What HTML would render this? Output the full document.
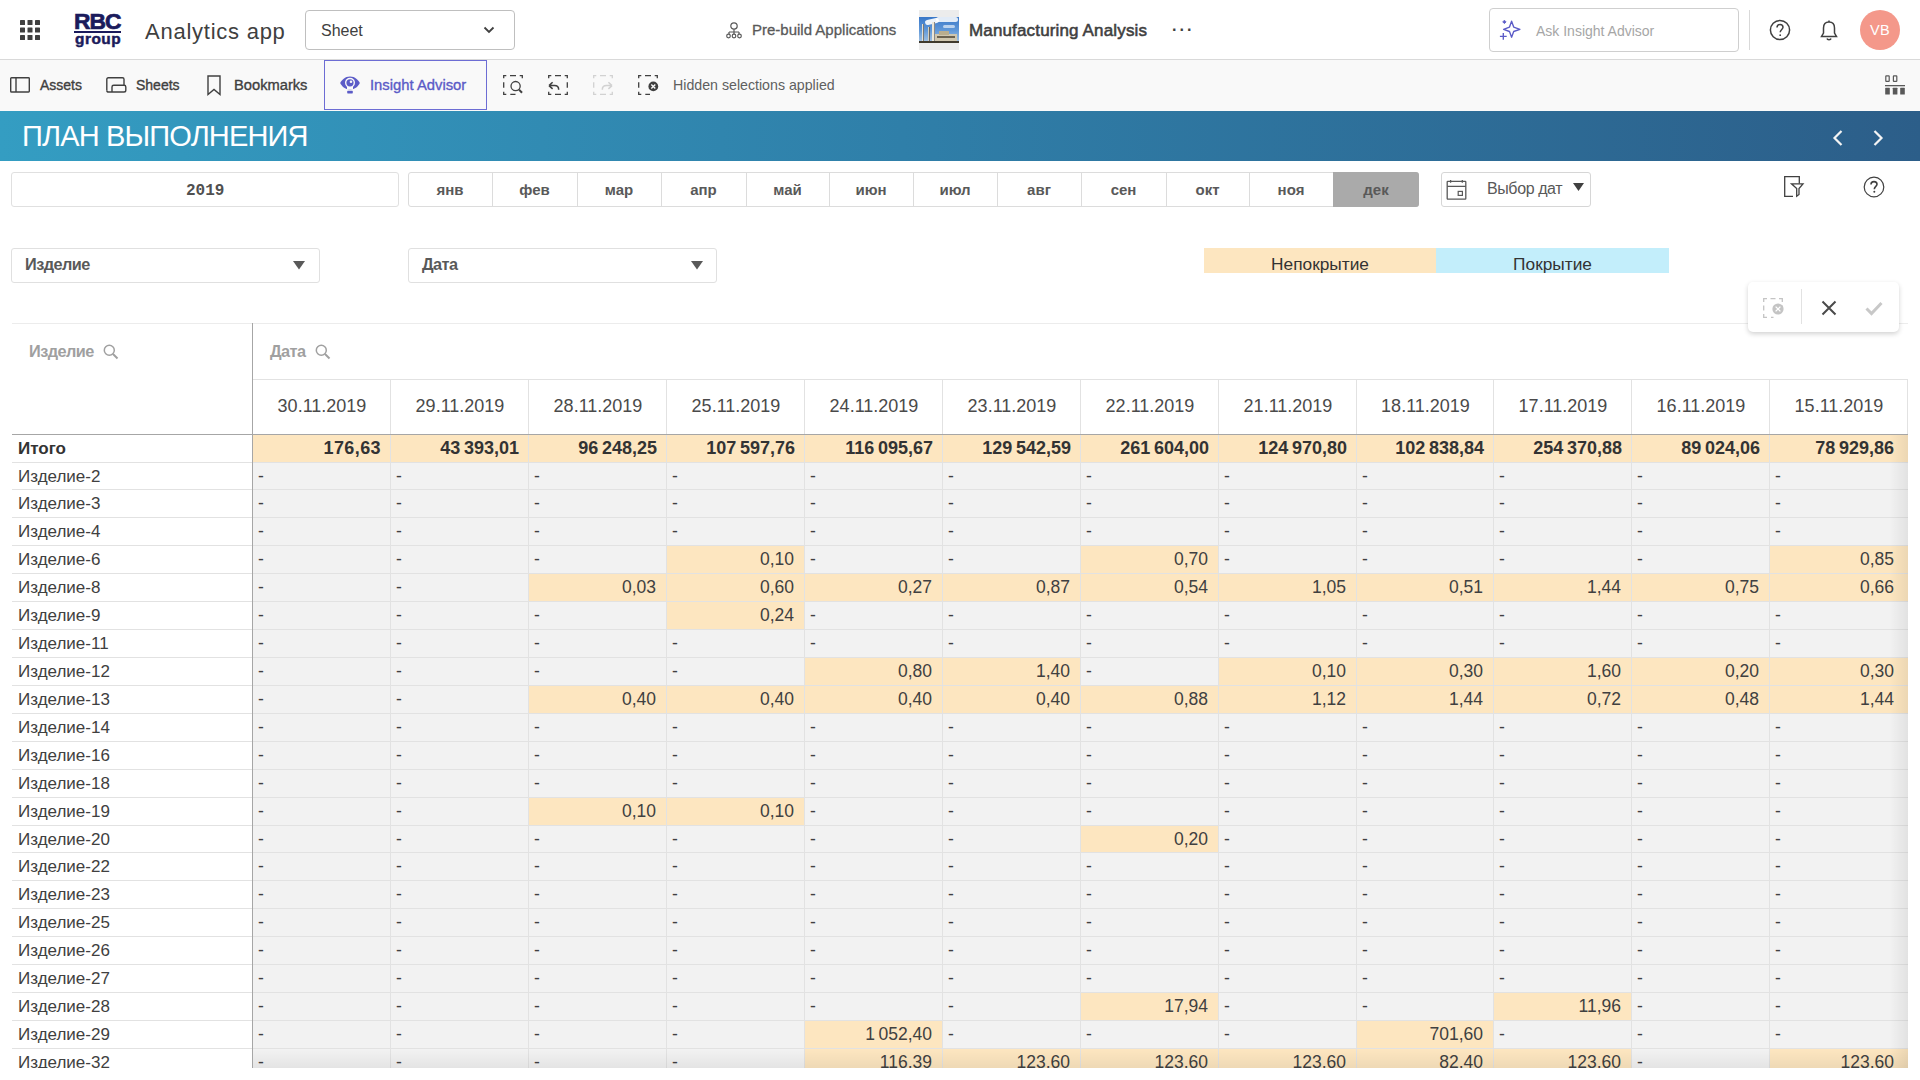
<!DOCTYPE html>
<html><head><meta charset="utf-8">
<style>
*{margin:0;padding:0;box-sizing:border-box}
html,body{width:1920px;height:1080px;overflow:hidden;background:#fff;font-family:"Liberation Sans",sans-serif;color:#404040}
.a{position:absolute}
svg{display:block}
/* top bar */
#top{position:absolute;left:0;top:0;width:1920px;height:60px;background:#fff;border-bottom:1px solid #d9d9d9}
#tool{position:absolute;left:0;top:60px;width:1920px;height:51px;background:#f9f9f9}
#title{position:absolute;left:0;top:111px;width:1920px;height:50px;background:linear-gradient(90deg,#349dc2 0%,#2f7fa9 47%,#2c5e89 100%)}
.txt{position:absolute;white-space:pre;line-height:1}
.box{position:absolute;border:1px solid #e0e0e0;border-radius:3px;background:#fff}
.mon{position:absolute;top:172px;height:35px;border:1px solid #dcdcdc;border-left:none;background:#fff;font:bold 15px "Liberation Sans",sans-serif;color:#595959;text-align:center;line-height:33px}
</style></head><body>
<div id="top">
  <!-- grid icon -->
  <svg class="a" style="left:20px;top:20px" width="20" height="20" viewBox="0 0 20 20" fill="#404040">
    <rect x="0" y="0" width="5" height="5" rx="0.6"/><rect x="7.5" y="0" width="5" height="5" rx="0.6"/><rect x="15" y="0" width="5" height="5" rx="0.6"/>
    <rect x="0" y="7.5" width="5" height="5" rx="0.6"/><rect x="7.5" y="7.5" width="5" height="5" rx="0.6"/><rect x="15" y="7.5" width="5" height="5" rx="0.6"/>
    <rect x="0" y="15" width="5" height="5" rx="0.6"/><rect x="7.5" y="15" width="5" height="5" rx="0.6"/><rect x="15" y="15" width="5" height="5" rx="0.6"/>
  </svg>
  <!-- logo -->
  <div class="txt" style="left:74px;top:8px;font:bold 22.8px 'Liberation Sans';color:#1b1b5c;letter-spacing:-1px;-webkit-text-stroke:0.7px #1b1b5c">RBC</div>
  <div class="a" style="left:74px;top:31px;width:47px;height:2px;background:#1b1b5c"></div>
  <div class="txt" style="left:75px;top:30px;font:bold 15.4px 'Liberation Sans';color:#1b1b5c;letter-spacing:0.5px;-webkit-text-stroke:0.5px #1b1b5c">group</div>
  <div class="txt" style="left:145px;top:19px;font:22px 'Liberation Sans';color:#404040;letter-spacing:0.75px">Analytics app</div>
  <!-- sheet dropdown -->
  <div class="a" style="left:305px;top:10px;width:210px;height:40px;border:1px solid #bfbfbf;border-radius:4px"></div>
  <div class="txt" style="left:321px;top:22px;font:16px 'Liberation Sans';color:#404040">Sheet</div>
  <svg class="a" style="left:483px;top:26px" width="12" height="8" viewBox="0 0 12 8"><path d="M1.5 1.5 L6 6 L10.5 1.5" stroke="#404040" stroke-width="1.8" fill="none"/></svg>
  <!-- pre-build -->
  <svg class="a" style="left:725px;top:21px" width="18" height="18" viewBox="0 0 18 18" fill="none" stroke="#595959" stroke-width="1.2">
    <circle cx="9" cy="5" r="3.2"/><path d="M9 8.2 V11 M4 11 H14 M4 11 V13 M9 11 V13 M14 11 V13"/><circle cx="3.5" cy="15" r="1.8"/><circle cx="9" cy="15" r="1.8"/><circle cx="14.5" cy="15" r="1.8"/>
  </svg>
  <div class="txt" style="left:752px;top:21px;font:15px 'Liberation Sans';color:#595959;-webkit-text-stroke:0.3px #595959">Pre-build Applications</div>
  <!-- thumbnail -->
  <div class="a" style="left:919px;top:10px;width:40px;height:40px;background:#ececec;overflow:hidden">
    <div class="a" style="left:0;top:7px;width:40px;height:26px;background:linear-gradient(180deg,#3a78c8 0%,#5f97d8 50%,#a8c6e4 100%)"></div>
    <div class="a" style="left:6px;top:9px;width:14px;height:5px;border-radius:3px;background:rgba(255,255,255,0.9);transform:rotate(-12deg)"></div>
    <div class="a" style="left:17px;top:7px;width:22px;height:5px;border-radius:3px;background:rgba(255,255,255,0.85)"></div>
    <div class="a" style="left:24px;top:15px;width:12px;height:3px;border-radius:2px;background:rgba(255,255,255,0.6)"></div>
    <div class="a" style="left:3px;top:14px;width:2px;height:17px;background:#e4e0d4;border-right:1px solid #777"></div>
    <div class="a" style="left:9px;top:17px;width:2px;height:14px;background:#d4cfc0;border-right:1px solid #666"></div>
    <div class="a" style="left:13px;top:12px;width:3px;height:19px;background:#ebe6d8;border-right:1px solid #888"></div>
    <div class="a" style="left:16px;top:24px;width:22px;height:8px;background:#cfc6ae"></div>
    <div class="a" style="left:20px;top:21px;width:10px;height:4px;background:#b9ad8e"></div>
    <div class="a" style="left:18px;top:26px;width:18px;height:2px;background:#6b6250"></div>
    <div class="a" style="left:0;top:31px;width:40px;height:2px;background:#3f392c"></div>
  </div>
  <div class="txt" style="left:969px;top:21px;font:17px 'Liberation Sans';color:#404040;letter-spacing:0.15px;-webkit-text-stroke:0.55px #404040">Manufacturing Analysis</div>
  <div class="txt" style="left:1172px;top:21px;font:bold 16px 'Liberation Sans';color:#404040;letter-spacing:2.2px">···</div>
  <!-- ask insight -->
  <div class="a" style="left:1489px;top:8px;width:250px;height:44px;border:1px solid #cfcfcf;border-radius:4px"></div>
  <svg class="a" style="left:1499px;top:18px" width="24" height="24" viewBox="0 0 24 24" fill="none" stroke="#5b5bc7" stroke-width="1.35" stroke-linejoin="round">
    <path d="M12.6 3.2 L14.7 9.1 L20.9 11.3 L14.7 13.5 L12.6 19.2 L10.5 13.5 L4.6 11.3 L10.5 9.1 Z"/>
    <path d="M0.9 18.4 H7.7 M4.3 15 V21.8"/>
    <path d="M5.4 2.2 L7.1 3.9 L5.4 5.6 L3.7 3.9 Z" fill="#5b5bc7" stroke-width="0.8"/>
  </svg>
  <div class="txt" style="left:1536px;top:23px;font:14px 'Liberation Sans';color:#a6a6a6">Ask Insight Advisor</div>
  <div class="a" style="left:1749px;top:10px;width:1px;height:40px;background:#d9d9d9"></div>
  <svg class="a" style="left:1769px;top:19px" width="22" height="22" viewBox="0 0 22 22" fill="none" stroke="#404040" stroke-width="1.5">
    <circle cx="11" cy="11" r="9.6"/><path d="M8 8.6 C8 6.6 9.4 5.5 11 5.5 C12.8 5.5 14 6.7 14 8.3 C14 10.4 11.2 10.6 11.2 13.3"/><circle cx="11.2" cy="16.2" r="0.9" fill="#404040" stroke="none"/>
  </svg>
  <svg class="a" style="left:1819px;top:20px" width="20" height="22" viewBox="0 0 20 22" fill="none" stroke="#404040" stroke-width="1.5">
    <path d="M10 2 C6 2 4.5 5 4.5 8 V13 L2.5 16.5 H17.5 L15.5 13 V8 C15.5 5 14 2 10 2 Z"/><path d="M8 18.5 C8.3 20 11.7 20 12 18.5"/><path d="M10 0.5 V2"/>
  </svg>
  <div class="a" style="left:1860px;top:10px;width:40px;height:40px;border-radius:50%;background:#f4988a;color:#fff;font:14.5px 'Liberation Sans';text-align:center;line-height:40px;letter-spacing:0.3px">VB</div>
</div>

<div id="tool">
  <svg class="a" style="left:10px;top:17px" width="20" height="16" viewBox="0 0 20 16" fill="none" stroke="#404040" stroke-width="1.4"><rect x="0.7" y="0.7" width="18.6" height="14.3" rx="0.8"/><path d="M6 0.7 V15"/></svg>
  <div class="txt" style="left:40px;top:17px;font:14px 'Liberation Sans';color:#404040;-webkit-text-stroke:0.35px #404040">Assets</div>
  <svg class="a" style="left:106px;top:17px" width="21" height="16" viewBox="0 0 21 16" fill="none" stroke="#404040" stroke-width="1.4"><path d="M0.8 13.5 V2.3 Q0.8 0.8 2.3 0.8 H16.5 Q18 0.8 18 2.3 V8"/><path d="M6 14.5 V10 Q6 8.3 7.7 8.3 H18.2 Q19.8 8.3 19.8 10 V13.2 Q19.8 15 18 15 H2.5 Q0.8 15 0.8 13.5"/></svg>
  <div class="txt" style="left:136px;top:17px;font:14px 'Liberation Sans';color:#404040;-webkit-text-stroke:0.35px #404040">Sheets</div>
  <svg class="a" style="left:207px;top:15px" width="14" height="21" viewBox="0 0 14 21" fill="none" stroke="#404040" stroke-width="1.4"><path d="M1 1 H13 V19.5 L7 14.5 L1 19.5 Z"/></svg>
  <div class="txt" style="left:234px;top:17px;font:14.7px 'Liberation Sans';color:#404040;-webkit-text-stroke:0.35px #404040">Bookmarks</div>
  <div class="a" style="left:324px;top:0;width:163px;height:50px;border:1px solid #6d6dd4;background:#f9f9f9"></div>
  <svg class="a" style="left:340px;top:16px" width="20" height="18" viewBox="0 0 20 18"><path d="M10 0.5 C5 0.5 1.6 4 0.2 7 C1.6 10 5 13.5 10 13.5 C15 13.5 18.4 10 19.8 7 C18.4 4 15 0.5 10 0.5 Z" fill="#5b5bc7"/><circle cx="10" cy="6.8" r="5" fill="#f9f9f9"/><path d="M7 10 H13 V13.5 H7 Z" fill="#f9f9f9"/><circle cx="10" cy="6.8" r="3.6" fill="#5b5bc7"/><circle cx="11" cy="5.8" r="1.3" fill="#f9f9f9"/><rect x="7.2" y="14.8" width="5.6" height="2.6" rx="0.6" fill="#5b5bc7"/></svg>
  <div class="txt" style="left:370px;top:17px;font:14.8px 'Liberation Sans';color:#5b5bc7;-webkit-text-stroke:0.35px #5b5bc7">Insight Advisor</div>
  <svg class="a" style="left:503px;top:15px" width="21" height="21" viewBox="0 0 21 21" fill="none" stroke="#404040" stroke-width="1.3"><path d="M0.7 3.3 V0.7 H3.3 M7 0.7 H13 M16.7 0.7 H19.3 V3.3 M0.7 7.3 V12.7 M0.7 16.7 V19.3 H3.3 M7.3 19.3 H12.5"/><circle cx="12.6" cy="11.1" r="4.6"/><path d="M16 14.6 L19 17.8" stroke-width="2"/></svg>
  <svg class="a" style="left:548px;top:15px" width="21" height="21" viewBox="0 0 21 21" fill="none" stroke="#404040" stroke-width="1.3"><path d="M0.7 3.3 V0.7 H3.3 M7 0.7 H13 M16.7 0.7 H19.3 V3.3 M19.3 7.3 V12.7 M19.3 16.7 V19.3 H16.7 M13 19.3 H7 M3.3 19.3 H0.7 V16.7"/><path d="M1 10.6 L4.6 7.3 M1 10.6 L4.6 13.9 M1 10.6 H6.5 C9.2 10.6 10.7 12.3 10.7 14.8" stroke-width="1.5"/></svg>
  <svg class="a" style="left:593px;top:15px" width="21" height="21" viewBox="0 0 21 21" fill="none" stroke="#d2d2d2" stroke-width="1.3"><path d="M0.7 3.3 V0.7 H3.3 M7 0.7 H13 M16.7 0.7 H19.3 V3.3 M0.7 7.3 V12.7 M19.3 16.7 V19.3 H16.7 M13 19.3 H7 M3.3 19.3 H0.7 V16.7"/><path d="M19 10.6 L15.4 7.3 M19 10.6 L15.4 13.9 M19 10.6 H13.5 C10.8 10.6 9.3 12.3 9.3 14.8" stroke-width="1.5"/></svg>
  <svg class="a" style="left:638px;top:15px" width="21" height="21" viewBox="0 0 21 21" fill="none" stroke="#404040" stroke-width="1.3"><path d="M0.7 3.3 V0.7 H3.3 M7 0.7 H13 M16.7 0.7 H19.3 V3.3 M0.7 7.3 V12.7 M0.7 16.7 V19.3 H3.3 M7.3 19.3 H12"/><circle cx="15.3" cy="11.4" r="4.9" fill="#404040" stroke="none"/><path d="M13.3 9.4 L17.3 13.4 M17.3 9.4 L13.3 13.4" stroke="#f9f9f9" stroke-width="1.4"/></svg>
  <div class="txt" style="left:673px;top:17px;font:14.2px 'Liberation Sans';color:#5f5f5f">Hidden selections applied</div>
  <svg class="a" style="left:1884px;top:15px" width="22" height="21" viewBox="0 0 22 21" fill="#595959"><rect x="1.8" y="0.8" width="3.4" height="5.6" rx="0.5" fill="none" stroke="#595959" stroke-width="1.2"/><rect x="9.4" y="0.8" width="3.4" height="5.6" rx="0.5" fill="none" stroke="#595959" stroke-width="1.2"/><rect x="1" y="10" width="20" height="1.3"/><rect x="1.2" y="12.8" width="4.6" height="6.8" rx="0.4"/><rect x="8.8" y="12.8" width="4.6" height="6.8" rx="0.4"/><rect x="16.2" y="12.8" width="4.6" height="6.8" rx="0.4"/></svg>
</div>

<div id="title">
  <div class="txt" style="left:22px;top:9px;font:29px 'Liberation Sans';color:#fff;letter-spacing:-0.85px">ПЛАН ВЫПОЛНЕНИЯ</div>
  <svg class="a" style="left:1831px;top:17px" width="14" height="20" viewBox="0 0 14 20"><path d="M10.5 3 L3.5 10 L10.5 17" stroke="#f4f4f4" stroke-width="2.2" fill="none"/></svg>
  <svg class="a" style="left:1871px;top:17px" width="14" height="20" viewBox="0 0 14 20"><path d="M3.5 3 L10.5 10 L3.5 17" stroke="#f4f4f4" stroke-width="2.2" fill="none"/></svg>
</div>

<style>
.dh{position:absolute;top:380px;height:54px;font:18px "Liberation Sans",sans-serif;color:#4a4a4a;text-align:center;line-height:52px}
.tc{position:absolute;top:435px;height:27px;background:#fde6c0;font:bold 18px "Liberation Sans",sans-serif;color:#333;text-align:right;padding-right:10px;line-height:27px;letter-spacing:0.4px}
.rl{position:absolute;left:12px;width:240px;padding-left:6px;font:17px "Liberation Sans",sans-serif;color:#404040;line-height:27px;white-space:nowrap;overflow:hidden}
.c{position:absolute;font:17.5px "Liberation Sans",sans-serif;color:#404040;line-height:27px;white-space:nowrap;overflow:hidden}
.g{background:#f2f2f2;padding-left:5px}
.p{background:#fde6c0;text-align:right;padding-right:11px}
.vl{position:absolute;width:1px;background:#e2e2e2;z-index:2}
.hl{position:absolute;left:12px;width:1896px;height:1px;background:#e2e2e2;z-index:2}
</style>
<!-- filters row -->
<div class="box" style="left:11px;top:172px;width:388px;height:35px"></div>
<div class="txt" style="left:186px;top:182px;font:bold 16px 'Liberation Mono';color:#505050">2019</div>
<div class="a" style="left:408px;top:172px;width:1011px;height:35px;border:1px solid #dcdcdc;border-radius:3px;background:#fff"></div>
<div class="a" style="left:408px;top:172px;width:84px;height:35px;font:bold 15px Liberation Sans;color:#595959;text-align:center;line-height:35px">янв</div>
<div class="a" style="left:492px;top:173px;width:1px;height:33px;background:#dcdcdc"></div>
<div class="a" style="left:492px;top:172px;width:85px;height:35px;font:bold 15px Liberation Sans;color:#595959;text-align:center;line-height:35px">фев</div>
<div class="a" style="left:577px;top:173px;width:1px;height:33px;background:#dcdcdc"></div>
<div class="a" style="left:577px;top:172px;width:84px;height:35px;font:bold 15px Liberation Sans;color:#595959;text-align:center;line-height:35px">мар</div>
<div class="a" style="left:661px;top:173px;width:1px;height:33px;background:#dcdcdc"></div>
<div class="a" style="left:661px;top:172px;width:85px;height:35px;font:bold 15px Liberation Sans;color:#595959;text-align:center;line-height:35px">апр</div>
<div class="a" style="left:746px;top:173px;width:1px;height:33px;background:#dcdcdc"></div>
<div class="a" style="left:746px;top:172px;width:83px;height:35px;font:bold 15px Liberation Sans;color:#595959;text-align:center;line-height:35px">май</div>
<div class="a" style="left:829px;top:173px;width:1px;height:33px;background:#dcdcdc"></div>
<div class="a" style="left:829px;top:172px;width:84px;height:35px;font:bold 15px Liberation Sans;color:#595959;text-align:center;line-height:35px">июн</div>
<div class="a" style="left:913px;top:173px;width:1px;height:33px;background:#dcdcdc"></div>
<div class="a" style="left:913px;top:172px;width:84px;height:35px;font:bold 15px Liberation Sans;color:#595959;text-align:center;line-height:35px">июл</div>
<div class="a" style="left:997px;top:173px;width:1px;height:33px;background:#dcdcdc"></div>
<div class="a" style="left:997px;top:172px;width:84px;height:35px;font:bold 15px Liberation Sans;color:#595959;text-align:center;line-height:35px">авг</div>
<div class="a" style="left:1081px;top:173px;width:1px;height:33px;background:#dcdcdc"></div>
<div class="a" style="left:1081px;top:172px;width:85px;height:35px;font:bold 15px Liberation Sans;color:#595959;text-align:center;line-height:35px">сен</div>
<div class="a" style="left:1166px;top:173px;width:1px;height:33px;background:#dcdcdc"></div>
<div class="a" style="left:1166px;top:172px;width:83px;height:35px;font:bold 15px Liberation Sans;color:#595959;text-align:center;line-height:35px">окт</div>
<div class="a" style="left:1249px;top:173px;width:1px;height:33px;background:#dcdcdc"></div>
<div class="a" style="left:1249px;top:172px;width:84px;height:35px;font:bold 15px Liberation Sans;color:#595959;text-align:center;line-height:35px">ноя</div>
<div class="a" style="left:1333px;top:172px;width:86px;height:35px;background:#aaa;border-radius:0 3px 3px 0;font:bold 15px Liberation Sans;color:#595959;text-align:center;line-height:35px">дек</div>
<div class="box" style="left:1441px;top:172px;width:150px;height:35px;border-color:#d6d6d6"></div>
<svg class="a" style="left:1446px;top:180px" width="21" height="21" viewBox="0 0 21 21" fill="none" stroke="#595959" stroke-width="1.3"><rect x="1.2" y="1.3" width="18.6" height="17.8" rx="0.6"/><path d="M1.2 6.4 H19.8 M4.6 0 V2.8 M16.3 0 V2.8"/><rect x="12.2" y="11.4" width="4.2" height="4" stroke-width="1.2"/></svg>
<div class="txt" style="left:1487px;top:180px;font:16px 'Liberation Sans';color:#595959;letter-spacing:-0.4px">Выбор дат</div>
<svg class="a" style="left:1573px;top:183px" width="11" height="8" viewBox="0 0 11 8"><path d="M0 0 H11 L5.5 8 Z" fill="#404040"/></svg>
<svg class="a" style="left:1784px;top:176px" width="22" height="22" viewBox="0 0 22 22" fill="none" stroke="#404040" stroke-width="1.3"><path d="M9 20.3 H0.7 V0.7 H15.3 V7.5"/><path d="M7.5 7.8 H19 L15 12.5 V18.5 L12.7 20.2 V12.5 Z"/></svg>
<svg class="a" style="left:1863px;top:176px" width="22" height="22" viewBox="0 0 22 22" fill="none" stroke="#404040" stroke-width="1.2"><circle cx="11" cy="11" r="9.8"/><path d="M8 8.5 C8 6.5 9.4 5.6 11 5.6 C12.7 5.6 14 6.7 14 8.3 C14 10.3 11.3 10.6 11.3 13.2" stroke-width="1.6"/><circle cx="11.3" cy="15.8" r="1" fill="#404040" stroke="none"/></svg>

<!-- dropdowns -->
<div class="box" style="left:11px;top:248px;width:309px;height:35px"></div>
<div class="txt" style="left:25px;top:255px;font:bold 16.3px 'Liberation Sans';color:#595959;letter-spacing:-0.55px">Изделие</div>
<svg class="a" style="left:293px;top:261px" width="12" height="9" viewBox="0 0 12 9"><path d="M0 0 H12 L6 8.6 Z" fill="#595959"/></svg>
<div class="box" style="left:408px;top:248px;width:309px;height:35px"></div>
<div class="txt" style="left:422px;top:255px;font:bold 16.3px 'Liberation Sans';color:#595959;letter-spacing:-0.55px">Дата</div>
<svg class="a" style="left:691px;top:261px" width="12" height="9" viewBox="0 0 12 9"><path d="M0 0 H12 L6 8.6 Z" fill="#595959"/></svg>

<!-- legend -->
<div class="a" style="left:1204px;top:248px;width:232px;height:25px;background:#fde6c0;font:17.3px 'Liberation Sans';color:#333;text-align:center;line-height:33px;overflow:hidden">Непокрытие</div>
<div class="a" style="left:1436px;top:248px;width:233px;height:25px;background:#c3eefb;font:17.3px 'Liberation Sans';color:#333;text-align:center;line-height:33px;overflow:hidden">Покрытие</div>

<!-- table frame -->
<div class="a" style="left:12px;top:323px;width:1896px;height:1px;background:#ececec"></div>
<div class="a" style="left:252px;top:323px;width:1px;height:745px;background:#a6a6a6;z-index:3"></div>
<div class="a" style="left:253px;top:379px;width:1655px;height:1px;background:#e2e2e2"></div>
<div class="a" style="left:1907px;top:379px;width:1px;height:55px;background:#e2e2e2"></div>
<div class="a" style="left:12px;top:434px;width:1896px;height:1px;background:#a6a6a6;z-index:3"></div>
<div class="txt" style="left:29px;top:342px;font:bold 16.3px 'Liberation Sans';color:#a0a0a0;letter-spacing:-0.55px">Изделие</div>
<svg class="a" style="left:103px;top:344px" width="16" height="16" viewBox="0 0 16 16" fill="none" stroke="#a0a0a0" stroke-width="1.5"><circle cx="6.3" cy="6.3" r="5"/><path d="M10 10 L14.5 14.5" stroke-width="2"/></svg>
<div class="txt" style="left:270px;top:342px;font:bold 16.3px 'Liberation Sans';color:#a0a0a0;letter-spacing:-0.55px">Дата</div>
<svg class="a" style="left:315px;top:344px" width="16" height="16" viewBox="0 0 16 16" fill="none" stroke="#a0a0a0" stroke-width="1.5"><circle cx="6.3" cy="6.3" r="5"/><path d="M10 10 L14.5 14.5" stroke-width="2"/></svg>
<div class="txt" style="left:18px;top:439px;font:bold 17px 'Liberation Sans';color:#333">Итого</div>
<div class="a" style="left:12px;top:462px;width:1896px;height:1px;background:#e2e2e2;z-index:2"></div>

<!-- selection popup -->
<div class="a" style="left:1748px;top:282px;width:151px;height:50px;background:#fff;border-radius:5px;box-shadow:0 2px 5px rgba(0,0,0,0.18);z-index:10">
  <svg class="a" style="left:15px;top:16px" width="20" height="20" viewBox="0 0 20 20" fill="none" stroke="#c4c4c4" stroke-width="1.3"><path d="M0.7 4 V0.7 H4 M7.5 0.7 H12.5 M16 0.7 H19.3 V4 M19.3 7.5 V10 M4 19.3 H0.7 V16 M0.7 12.5 V7.5 M8 19.3 H10.5"/></svg>
  <svg class="a" style="left:24px;top:21px" width="12" height="12" viewBox="0 0 12 12"><circle cx="6" cy="6" r="5.6" fill="#c4c4c4"/><path d="M3.6 3.6 L8.4 8.4 M8.4 3.6 L3.6 8.4" stroke="#fff" stroke-width="1.3"/></svg>
  <div class="a" style="left:53px;top:7px;width:1px;height:35px;background:#e2e2e2"></div>
  <svg class="a" style="left:73px;top:18px" width="16" height="16" viewBox="0 0 16 16"><path d="M1.5 1.5 L14.5 14.5 M14.5 1.5 L1.5 14.5" stroke="#4a4a4a" stroke-width="2"/></svg>
  <svg class="a" style="left:117px;top:19px" width="18" height="15" viewBox="0 0 18 15"><path d="M1.5 7.5 L6.5 12.5 L16.5 2" stroke="#c8c8c8" stroke-width="3" fill="none"/></svg>
</div>
<div id="tbl">
<div class="dh" style="left:253px;width:138px">30.11.2019</div>
<div class="dh" style="left:391px;width:138px">29.11.2019</div>
<div class="vl" style="left:390px;top:380px;height:688px"></div>
<div class="dh" style="left:529px;width:138px">28.11.2019</div>
<div class="vl" style="left:528px;top:380px;height:688px"></div>
<div class="dh" style="left:667px;width:138px">25.11.2019</div>
<div class="vl" style="left:666px;top:380px;height:688px"></div>
<div class="dh" style="left:805px;width:138px">24.11.2019</div>
<div class="vl" style="left:804px;top:380px;height:688px"></div>
<div class="dh" style="left:943px;width:138px">23.11.2019</div>
<div class="vl" style="left:942px;top:380px;height:688px"></div>
<div class="dh" style="left:1081px;width:138px">22.11.2019</div>
<div class="vl" style="left:1080px;top:380px;height:688px"></div>
<div class="dh" style="left:1219px;width:138px">21.11.2019</div>
<div class="vl" style="left:1218px;top:380px;height:688px"></div>
<div class="dh" style="left:1357px;width:137px">18.11.2019</div>
<div class="vl" style="left:1356px;top:380px;height:688px"></div>
<div class="dh" style="left:1494px;width:138px">17.11.2019</div>
<div class="vl" style="left:1493px;top:380px;height:688px"></div>
<div class="dh" style="left:1632px;width:138px">16.11.2019</div>
<div class="vl" style="left:1631px;top:380px;height:688px"></div>
<div class="dh" style="left:1770px;width:138px">15.11.2019</div>
<div class="vl" style="left:1769px;top:380px;height:688px"></div>
<div class="tc" style="left:253px;width:138px;">176,63</div>
<div class="tc" style="left:391px;width:138px;">43&#8239;393,01</div>
<div class="tc" style="left:529px;width:138px;">96&#8239;248,25</div>
<div class="tc" style="left:667px;width:138px;">107&#8239;597,76</div>
<div class="tc" style="left:805px;width:138px;">116&#8239;095,67</div>
<div class="tc" style="left:943px;width:138px;">129&#8239;542,59</div>
<div class="tc" style="left:1081px;width:138px;">261&#8239;604,00</div>
<div class="tc" style="left:1219px;width:138px;">124&#8239;970,80</div>
<div class="tc" style="left:1357px;width:137px;">102&#8239;838,84</div>
<div class="tc" style="left:1494px;width:138px;">254&#8239;370,88</div>
<div class="tc" style="left:1632px;width:138px;">89&#8239;024,06</div>
<div class="tc" style="left:1770px;width:138px;padding-right:14px;">78&#8239;929,86</div>
<div class="rl" style="top:463px;height:27px">Изделие-2</div>
<div class="c g" style="left:253px;top:463px;width:138px;height:27px">-</div>
<div class="c g" style="left:391px;top:463px;width:138px;height:27px">-</div>
<div class="c g" style="left:529px;top:463px;width:138px;height:27px">-</div>
<div class="c g" style="left:667px;top:463px;width:138px;height:27px">-</div>
<div class="c g" style="left:805px;top:463px;width:138px;height:27px">-</div>
<div class="c g" style="left:943px;top:463px;width:138px;height:27px">-</div>
<div class="c g" style="left:1081px;top:463px;width:138px;height:27px">-</div>
<div class="c g" style="left:1219px;top:463px;width:138px;height:27px">-</div>
<div class="c g" style="left:1357px;top:463px;width:137px;height:27px">-</div>
<div class="c g" style="left:1494px;top:463px;width:138px;height:27px">-</div>
<div class="c g" style="left:1632px;top:463px;width:138px;height:27px">-</div>
<div class="c g" style="left:1770px;top:463px;width:138px;height:27px">-</div>
<div class="hl" style="top:489px"></div>
<div class="rl" style="top:490px;height:28px">Изделие-3</div>
<div class="c g" style="left:253px;top:490px;width:138px;height:28px">-</div>
<div class="c g" style="left:391px;top:490px;width:138px;height:28px">-</div>
<div class="c g" style="left:529px;top:490px;width:138px;height:28px">-</div>
<div class="c g" style="left:667px;top:490px;width:138px;height:28px">-</div>
<div class="c g" style="left:805px;top:490px;width:138px;height:28px">-</div>
<div class="c g" style="left:943px;top:490px;width:138px;height:28px">-</div>
<div class="c g" style="left:1081px;top:490px;width:138px;height:28px">-</div>
<div class="c g" style="left:1219px;top:490px;width:138px;height:28px">-</div>
<div class="c g" style="left:1357px;top:490px;width:137px;height:28px">-</div>
<div class="c g" style="left:1494px;top:490px;width:138px;height:28px">-</div>
<div class="c g" style="left:1632px;top:490px;width:138px;height:28px">-</div>
<div class="c g" style="left:1770px;top:490px;width:138px;height:28px">-</div>
<div class="hl" style="top:517px"></div>
<div class="rl" style="top:518px;height:28px">Изделие-4</div>
<div class="c g" style="left:253px;top:518px;width:138px;height:28px">-</div>
<div class="c g" style="left:391px;top:518px;width:138px;height:28px">-</div>
<div class="c g" style="left:529px;top:518px;width:138px;height:28px">-</div>
<div class="c g" style="left:667px;top:518px;width:138px;height:28px">-</div>
<div class="c g" style="left:805px;top:518px;width:138px;height:28px">-</div>
<div class="c g" style="left:943px;top:518px;width:138px;height:28px">-</div>
<div class="c g" style="left:1081px;top:518px;width:138px;height:28px">-</div>
<div class="c g" style="left:1219px;top:518px;width:138px;height:28px">-</div>
<div class="c g" style="left:1357px;top:518px;width:137px;height:28px">-</div>
<div class="c g" style="left:1494px;top:518px;width:138px;height:28px">-</div>
<div class="c g" style="left:1632px;top:518px;width:138px;height:28px">-</div>
<div class="c g" style="left:1770px;top:518px;width:138px;height:28px">-</div>
<div class="hl" style="top:545px"></div>
<div class="rl" style="top:546px;height:28px">Изделие-6</div>
<div class="c g" style="left:253px;top:546px;width:138px;height:28px">-</div>
<div class="c g" style="left:391px;top:546px;width:138px;height:28px">-</div>
<div class="c g" style="left:529px;top:546px;width:138px;height:28px">-</div>
<div class="c p" style="left:667px;top:546px;width:138px;height:28px;">0,10</div>
<div class="c g" style="left:805px;top:546px;width:138px;height:28px">-</div>
<div class="c g" style="left:943px;top:546px;width:138px;height:28px">-</div>
<div class="c p" style="left:1081px;top:546px;width:138px;height:28px;">0,70</div>
<div class="c g" style="left:1219px;top:546px;width:138px;height:28px">-</div>
<div class="c g" style="left:1357px;top:546px;width:137px;height:28px">-</div>
<div class="c g" style="left:1494px;top:546px;width:138px;height:28px">-</div>
<div class="c g" style="left:1632px;top:546px;width:138px;height:28px">-</div>
<div class="c p" style="left:1770px;top:546px;width:138px;height:28px;padding-right:14px;">0,85</div>
<div class="hl" style="top:573px"></div>
<div class="rl" style="top:574px;height:28px">Изделие-8</div>
<div class="c g" style="left:253px;top:574px;width:138px;height:28px">-</div>
<div class="c g" style="left:391px;top:574px;width:138px;height:28px">-</div>
<div class="c p" style="left:529px;top:574px;width:138px;height:28px;">0,03</div>
<div class="c p" style="left:667px;top:574px;width:138px;height:28px;">0,60</div>
<div class="c p" style="left:805px;top:574px;width:138px;height:28px;">0,27</div>
<div class="c p" style="left:943px;top:574px;width:138px;height:28px;">0,87</div>
<div class="c p" style="left:1081px;top:574px;width:138px;height:28px;">0,54</div>
<div class="c p" style="left:1219px;top:574px;width:138px;height:28px;">1,05</div>
<div class="c p" style="left:1357px;top:574px;width:137px;height:28px;">0,51</div>
<div class="c p" style="left:1494px;top:574px;width:138px;height:28px;">1,44</div>
<div class="c p" style="left:1632px;top:574px;width:138px;height:28px;">0,75</div>
<div class="c p" style="left:1770px;top:574px;width:138px;height:28px;padding-right:14px;">0,66</div>
<div class="hl" style="top:601px"></div>
<div class="rl" style="top:602px;height:28px">Изделие-9</div>
<div class="c g" style="left:253px;top:602px;width:138px;height:28px">-</div>
<div class="c g" style="left:391px;top:602px;width:138px;height:28px">-</div>
<div class="c g" style="left:529px;top:602px;width:138px;height:28px">-</div>
<div class="c p" style="left:667px;top:602px;width:138px;height:28px;">0,24</div>
<div class="c g" style="left:805px;top:602px;width:138px;height:28px">-</div>
<div class="c g" style="left:943px;top:602px;width:138px;height:28px">-</div>
<div class="c g" style="left:1081px;top:602px;width:138px;height:28px">-</div>
<div class="c g" style="left:1219px;top:602px;width:138px;height:28px">-</div>
<div class="c g" style="left:1357px;top:602px;width:137px;height:28px">-</div>
<div class="c g" style="left:1494px;top:602px;width:138px;height:28px">-</div>
<div class="c g" style="left:1632px;top:602px;width:138px;height:28px">-</div>
<div class="c g" style="left:1770px;top:602px;width:138px;height:28px">-</div>
<div class="hl" style="top:629px"></div>
<div class="rl" style="top:630px;height:28px">Изделие-11</div>
<div class="c g" style="left:253px;top:630px;width:138px;height:28px">-</div>
<div class="c g" style="left:391px;top:630px;width:138px;height:28px">-</div>
<div class="c g" style="left:529px;top:630px;width:138px;height:28px">-</div>
<div class="c g" style="left:667px;top:630px;width:138px;height:28px">-</div>
<div class="c g" style="left:805px;top:630px;width:138px;height:28px">-</div>
<div class="c g" style="left:943px;top:630px;width:138px;height:28px">-</div>
<div class="c g" style="left:1081px;top:630px;width:138px;height:28px">-</div>
<div class="c g" style="left:1219px;top:630px;width:138px;height:28px">-</div>
<div class="c g" style="left:1357px;top:630px;width:137px;height:28px">-</div>
<div class="c g" style="left:1494px;top:630px;width:138px;height:28px">-</div>
<div class="c g" style="left:1632px;top:630px;width:138px;height:28px">-</div>
<div class="c g" style="left:1770px;top:630px;width:138px;height:28px">-</div>
<div class="hl" style="top:657px"></div>
<div class="rl" style="top:658px;height:28px">Изделие-12</div>
<div class="c g" style="left:253px;top:658px;width:138px;height:28px">-</div>
<div class="c g" style="left:391px;top:658px;width:138px;height:28px">-</div>
<div class="c g" style="left:529px;top:658px;width:138px;height:28px">-</div>
<div class="c g" style="left:667px;top:658px;width:138px;height:28px">-</div>
<div class="c p" style="left:805px;top:658px;width:138px;height:28px;">0,80</div>
<div class="c p" style="left:943px;top:658px;width:138px;height:28px;">1,40</div>
<div class="c g" style="left:1081px;top:658px;width:138px;height:28px">-</div>
<div class="c p" style="left:1219px;top:658px;width:138px;height:28px;">0,10</div>
<div class="c p" style="left:1357px;top:658px;width:137px;height:28px;">0,30</div>
<div class="c p" style="left:1494px;top:658px;width:138px;height:28px;">1,60</div>
<div class="c p" style="left:1632px;top:658px;width:138px;height:28px;">0,20</div>
<div class="c p" style="left:1770px;top:658px;width:138px;height:28px;padding-right:14px;">0,30</div>
<div class="hl" style="top:685px"></div>
<div class="rl" style="top:686px;height:28px">Изделие-13</div>
<div class="c g" style="left:253px;top:686px;width:138px;height:28px">-</div>
<div class="c g" style="left:391px;top:686px;width:138px;height:28px">-</div>
<div class="c p" style="left:529px;top:686px;width:138px;height:28px;">0,40</div>
<div class="c p" style="left:667px;top:686px;width:138px;height:28px;">0,40</div>
<div class="c p" style="left:805px;top:686px;width:138px;height:28px;">0,40</div>
<div class="c p" style="left:943px;top:686px;width:138px;height:28px;">0,40</div>
<div class="c p" style="left:1081px;top:686px;width:138px;height:28px;">0,88</div>
<div class="c p" style="left:1219px;top:686px;width:138px;height:28px;">1,12</div>
<div class="c p" style="left:1357px;top:686px;width:137px;height:28px;">1,44</div>
<div class="c p" style="left:1494px;top:686px;width:138px;height:28px;">0,72</div>
<div class="c p" style="left:1632px;top:686px;width:138px;height:28px;">0,48</div>
<div class="c p" style="left:1770px;top:686px;width:138px;height:28px;padding-right:14px;">1,44</div>
<div class="hl" style="top:713px"></div>
<div class="rl" style="top:714px;height:28px">Изделие-14</div>
<div class="c g" style="left:253px;top:714px;width:138px;height:28px">-</div>
<div class="c g" style="left:391px;top:714px;width:138px;height:28px">-</div>
<div class="c g" style="left:529px;top:714px;width:138px;height:28px">-</div>
<div class="c g" style="left:667px;top:714px;width:138px;height:28px">-</div>
<div class="c g" style="left:805px;top:714px;width:138px;height:28px">-</div>
<div class="c g" style="left:943px;top:714px;width:138px;height:28px">-</div>
<div class="c g" style="left:1081px;top:714px;width:138px;height:28px">-</div>
<div class="c g" style="left:1219px;top:714px;width:138px;height:28px">-</div>
<div class="c g" style="left:1357px;top:714px;width:137px;height:28px">-</div>
<div class="c g" style="left:1494px;top:714px;width:138px;height:28px">-</div>
<div class="c g" style="left:1632px;top:714px;width:138px;height:28px">-</div>
<div class="c g" style="left:1770px;top:714px;width:138px;height:28px">-</div>
<div class="hl" style="top:741px"></div>
<div class="rl" style="top:742px;height:28px">Изделие-16</div>
<div class="c g" style="left:253px;top:742px;width:138px;height:28px">-</div>
<div class="c g" style="left:391px;top:742px;width:138px;height:28px">-</div>
<div class="c g" style="left:529px;top:742px;width:138px;height:28px">-</div>
<div class="c g" style="left:667px;top:742px;width:138px;height:28px">-</div>
<div class="c g" style="left:805px;top:742px;width:138px;height:28px">-</div>
<div class="c g" style="left:943px;top:742px;width:138px;height:28px">-</div>
<div class="c g" style="left:1081px;top:742px;width:138px;height:28px">-</div>
<div class="c g" style="left:1219px;top:742px;width:138px;height:28px">-</div>
<div class="c g" style="left:1357px;top:742px;width:137px;height:28px">-</div>
<div class="c g" style="left:1494px;top:742px;width:138px;height:28px">-</div>
<div class="c g" style="left:1632px;top:742px;width:138px;height:28px">-</div>
<div class="c g" style="left:1770px;top:742px;width:138px;height:28px">-</div>
<div class="hl" style="top:769px"></div>
<div class="rl" style="top:770px;height:28px">Изделие-18</div>
<div class="c g" style="left:253px;top:770px;width:138px;height:28px">-</div>
<div class="c g" style="left:391px;top:770px;width:138px;height:28px">-</div>
<div class="c g" style="left:529px;top:770px;width:138px;height:28px">-</div>
<div class="c g" style="left:667px;top:770px;width:138px;height:28px">-</div>
<div class="c g" style="left:805px;top:770px;width:138px;height:28px">-</div>
<div class="c g" style="left:943px;top:770px;width:138px;height:28px">-</div>
<div class="c g" style="left:1081px;top:770px;width:138px;height:28px">-</div>
<div class="c g" style="left:1219px;top:770px;width:138px;height:28px">-</div>
<div class="c g" style="left:1357px;top:770px;width:137px;height:28px">-</div>
<div class="c g" style="left:1494px;top:770px;width:138px;height:28px">-</div>
<div class="c g" style="left:1632px;top:770px;width:138px;height:28px">-</div>
<div class="c g" style="left:1770px;top:770px;width:138px;height:28px">-</div>
<div class="hl" style="top:797px"></div>
<div class="rl" style="top:798px;height:28px">Изделие-19</div>
<div class="c g" style="left:253px;top:798px;width:138px;height:28px">-</div>
<div class="c g" style="left:391px;top:798px;width:138px;height:28px">-</div>
<div class="c p" style="left:529px;top:798px;width:138px;height:28px;">0,10</div>
<div class="c p" style="left:667px;top:798px;width:138px;height:28px;">0,10</div>
<div class="c g" style="left:805px;top:798px;width:138px;height:28px">-</div>
<div class="c g" style="left:943px;top:798px;width:138px;height:28px">-</div>
<div class="c g" style="left:1081px;top:798px;width:138px;height:28px">-</div>
<div class="c g" style="left:1219px;top:798px;width:138px;height:28px">-</div>
<div class="c g" style="left:1357px;top:798px;width:137px;height:28px">-</div>
<div class="c g" style="left:1494px;top:798px;width:138px;height:28px">-</div>
<div class="c g" style="left:1632px;top:798px;width:138px;height:28px">-</div>
<div class="c g" style="left:1770px;top:798px;width:138px;height:28px">-</div>
<div class="hl" style="top:825px"></div>
<div class="rl" style="top:826px;height:27px">Изделие-20</div>
<div class="c g" style="left:253px;top:826px;width:138px;height:27px">-</div>
<div class="c g" style="left:391px;top:826px;width:138px;height:27px">-</div>
<div class="c g" style="left:529px;top:826px;width:138px;height:27px">-</div>
<div class="c g" style="left:667px;top:826px;width:138px;height:27px">-</div>
<div class="c g" style="left:805px;top:826px;width:138px;height:27px">-</div>
<div class="c g" style="left:943px;top:826px;width:138px;height:27px">-</div>
<div class="c p" style="left:1081px;top:826px;width:138px;height:27px;">0,20</div>
<div class="c g" style="left:1219px;top:826px;width:138px;height:27px">-</div>
<div class="c g" style="left:1357px;top:826px;width:137px;height:27px">-</div>
<div class="c g" style="left:1494px;top:826px;width:138px;height:27px">-</div>
<div class="c g" style="left:1632px;top:826px;width:138px;height:27px">-</div>
<div class="c g" style="left:1770px;top:826px;width:138px;height:27px">-</div>
<div class="hl" style="top:852px"></div>
<div class="rl" style="top:853px;height:28px">Изделие-22</div>
<div class="c g" style="left:253px;top:853px;width:138px;height:28px">-</div>
<div class="c g" style="left:391px;top:853px;width:138px;height:28px">-</div>
<div class="c g" style="left:529px;top:853px;width:138px;height:28px">-</div>
<div class="c g" style="left:667px;top:853px;width:138px;height:28px">-</div>
<div class="c g" style="left:805px;top:853px;width:138px;height:28px">-</div>
<div class="c g" style="left:943px;top:853px;width:138px;height:28px">-</div>
<div class="c g" style="left:1081px;top:853px;width:138px;height:28px">-</div>
<div class="c g" style="left:1219px;top:853px;width:138px;height:28px">-</div>
<div class="c g" style="left:1357px;top:853px;width:137px;height:28px">-</div>
<div class="c g" style="left:1494px;top:853px;width:138px;height:28px">-</div>
<div class="c g" style="left:1632px;top:853px;width:138px;height:28px">-</div>
<div class="c g" style="left:1770px;top:853px;width:138px;height:28px">-</div>
<div class="hl" style="top:880px"></div>
<div class="rl" style="top:881px;height:28px">Изделие-23</div>
<div class="c g" style="left:253px;top:881px;width:138px;height:28px">-</div>
<div class="c g" style="left:391px;top:881px;width:138px;height:28px">-</div>
<div class="c g" style="left:529px;top:881px;width:138px;height:28px">-</div>
<div class="c g" style="left:667px;top:881px;width:138px;height:28px">-</div>
<div class="c g" style="left:805px;top:881px;width:138px;height:28px">-</div>
<div class="c g" style="left:943px;top:881px;width:138px;height:28px">-</div>
<div class="c g" style="left:1081px;top:881px;width:138px;height:28px">-</div>
<div class="c g" style="left:1219px;top:881px;width:138px;height:28px">-</div>
<div class="c g" style="left:1357px;top:881px;width:137px;height:28px">-</div>
<div class="c g" style="left:1494px;top:881px;width:138px;height:28px">-</div>
<div class="c g" style="left:1632px;top:881px;width:138px;height:28px">-</div>
<div class="c g" style="left:1770px;top:881px;width:138px;height:28px">-</div>
<div class="hl" style="top:908px"></div>
<div class="rl" style="top:909px;height:28px">Изделие-25</div>
<div class="c g" style="left:253px;top:909px;width:138px;height:28px">-</div>
<div class="c g" style="left:391px;top:909px;width:138px;height:28px">-</div>
<div class="c g" style="left:529px;top:909px;width:138px;height:28px">-</div>
<div class="c g" style="left:667px;top:909px;width:138px;height:28px">-</div>
<div class="c g" style="left:805px;top:909px;width:138px;height:28px">-</div>
<div class="c g" style="left:943px;top:909px;width:138px;height:28px">-</div>
<div class="c g" style="left:1081px;top:909px;width:138px;height:28px">-</div>
<div class="c g" style="left:1219px;top:909px;width:138px;height:28px">-</div>
<div class="c g" style="left:1357px;top:909px;width:137px;height:28px">-</div>
<div class="c g" style="left:1494px;top:909px;width:138px;height:28px">-</div>
<div class="c g" style="left:1632px;top:909px;width:138px;height:28px">-</div>
<div class="c g" style="left:1770px;top:909px;width:138px;height:28px">-</div>
<div class="hl" style="top:936px"></div>
<div class="rl" style="top:937px;height:28px">Изделие-26</div>
<div class="c g" style="left:253px;top:937px;width:138px;height:28px">-</div>
<div class="c g" style="left:391px;top:937px;width:138px;height:28px">-</div>
<div class="c g" style="left:529px;top:937px;width:138px;height:28px">-</div>
<div class="c g" style="left:667px;top:937px;width:138px;height:28px">-</div>
<div class="c g" style="left:805px;top:937px;width:138px;height:28px">-</div>
<div class="c g" style="left:943px;top:937px;width:138px;height:28px">-</div>
<div class="c g" style="left:1081px;top:937px;width:138px;height:28px">-</div>
<div class="c g" style="left:1219px;top:937px;width:138px;height:28px">-</div>
<div class="c g" style="left:1357px;top:937px;width:137px;height:28px">-</div>
<div class="c g" style="left:1494px;top:937px;width:138px;height:28px">-</div>
<div class="c g" style="left:1632px;top:937px;width:138px;height:28px">-</div>
<div class="c g" style="left:1770px;top:937px;width:138px;height:28px">-</div>
<div class="hl" style="top:964px"></div>
<div class="rl" style="top:965px;height:28px">Изделие-27</div>
<div class="c g" style="left:253px;top:965px;width:138px;height:28px">-</div>
<div class="c g" style="left:391px;top:965px;width:138px;height:28px">-</div>
<div class="c g" style="left:529px;top:965px;width:138px;height:28px">-</div>
<div class="c g" style="left:667px;top:965px;width:138px;height:28px">-</div>
<div class="c g" style="left:805px;top:965px;width:138px;height:28px">-</div>
<div class="c g" style="left:943px;top:965px;width:138px;height:28px">-</div>
<div class="c g" style="left:1081px;top:965px;width:138px;height:28px">-</div>
<div class="c g" style="left:1219px;top:965px;width:138px;height:28px">-</div>
<div class="c g" style="left:1357px;top:965px;width:137px;height:28px">-</div>
<div class="c g" style="left:1494px;top:965px;width:138px;height:28px">-</div>
<div class="c g" style="left:1632px;top:965px;width:138px;height:28px">-</div>
<div class="c g" style="left:1770px;top:965px;width:138px;height:28px">-</div>
<div class="hl" style="top:992px"></div>
<div class="rl" style="top:993px;height:28px">Изделие-28</div>
<div class="c g" style="left:253px;top:993px;width:138px;height:28px">-</div>
<div class="c g" style="left:391px;top:993px;width:138px;height:28px">-</div>
<div class="c g" style="left:529px;top:993px;width:138px;height:28px">-</div>
<div class="c g" style="left:667px;top:993px;width:138px;height:28px">-</div>
<div class="c g" style="left:805px;top:993px;width:138px;height:28px">-</div>
<div class="c g" style="left:943px;top:993px;width:138px;height:28px">-</div>
<div class="c p" style="left:1081px;top:993px;width:138px;height:28px;">17,94</div>
<div class="c g" style="left:1219px;top:993px;width:138px;height:28px">-</div>
<div class="c g" style="left:1357px;top:993px;width:137px;height:28px">-</div>
<div class="c p" style="left:1494px;top:993px;width:138px;height:28px;">11,96</div>
<div class="c g" style="left:1632px;top:993px;width:138px;height:28px">-</div>
<div class="c g" style="left:1770px;top:993px;width:138px;height:28px">-</div>
<div class="hl" style="top:1020px"></div>
<div class="rl" style="top:1021px;height:28px">Изделие-29</div>
<div class="c g" style="left:253px;top:1021px;width:138px;height:28px">-</div>
<div class="c g" style="left:391px;top:1021px;width:138px;height:28px">-</div>
<div class="c g" style="left:529px;top:1021px;width:138px;height:28px">-</div>
<div class="c g" style="left:667px;top:1021px;width:138px;height:28px">-</div>
<div class="c p" style="left:805px;top:1021px;width:138px;height:28px;">1&#8239;052,40</div>
<div class="c g" style="left:943px;top:1021px;width:138px;height:28px">-</div>
<div class="c g" style="left:1081px;top:1021px;width:138px;height:28px">-</div>
<div class="c g" style="left:1219px;top:1021px;width:138px;height:28px">-</div>
<div class="c p" style="left:1357px;top:1021px;width:137px;height:28px;">701,60</div>
<div class="c g" style="left:1494px;top:1021px;width:138px;height:28px">-</div>
<div class="c g" style="left:1632px;top:1021px;width:138px;height:28px">-</div>
<div class="c g" style="left:1770px;top:1021px;width:138px;height:28px">-</div>
<div class="hl" style="top:1048px"></div>
<div class="rl" style="top:1049px;height:19px">Изделие-32</div>
<div class="c g" style="left:253px;top:1049px;width:138px;height:19px">-</div>
<div class="c g" style="left:391px;top:1049px;width:138px;height:19px">-</div>
<div class="c g" style="left:529px;top:1049px;width:138px;height:19px">-</div>
<div class="c g" style="left:667px;top:1049px;width:138px;height:19px">-</div>
<div class="c p" style="left:805px;top:1049px;width:138px;height:19px;">116,39</div>
<div class="c p" style="left:943px;top:1049px;width:138px;height:19px;">123,60</div>
<div class="c p" style="left:1081px;top:1049px;width:138px;height:19px;">123,60</div>
<div class="c p" style="left:1219px;top:1049px;width:138px;height:19px;">123,60</div>
<div class="c p" style="left:1357px;top:1049px;width:137px;height:19px;">82,40</div>
<div class="c p" style="left:1494px;top:1049px;width:138px;height:19px;">123,60</div>
<div class="c g" style="left:1632px;top:1049px;width:138px;height:19px">-</div>
<div class="c p" style="left:1770px;top:1049px;width:138px;height:19px;padding-right:14px;">123,60</div>
<div class="a" style="left:253px;top:1049px;width:1655px;height:19px;background:linear-gradient(180deg,rgba(0,0,0,0),rgba(0,0,0,0.06));z-index:4"></div>
<div class="a" style="left:1889px;top:435px;width:19px;height:633px;background:linear-gradient(90deg,rgba(0,0,0,0),rgba(0,0,0,0.065));z-index:4"></div>
</div>
</body></html>
